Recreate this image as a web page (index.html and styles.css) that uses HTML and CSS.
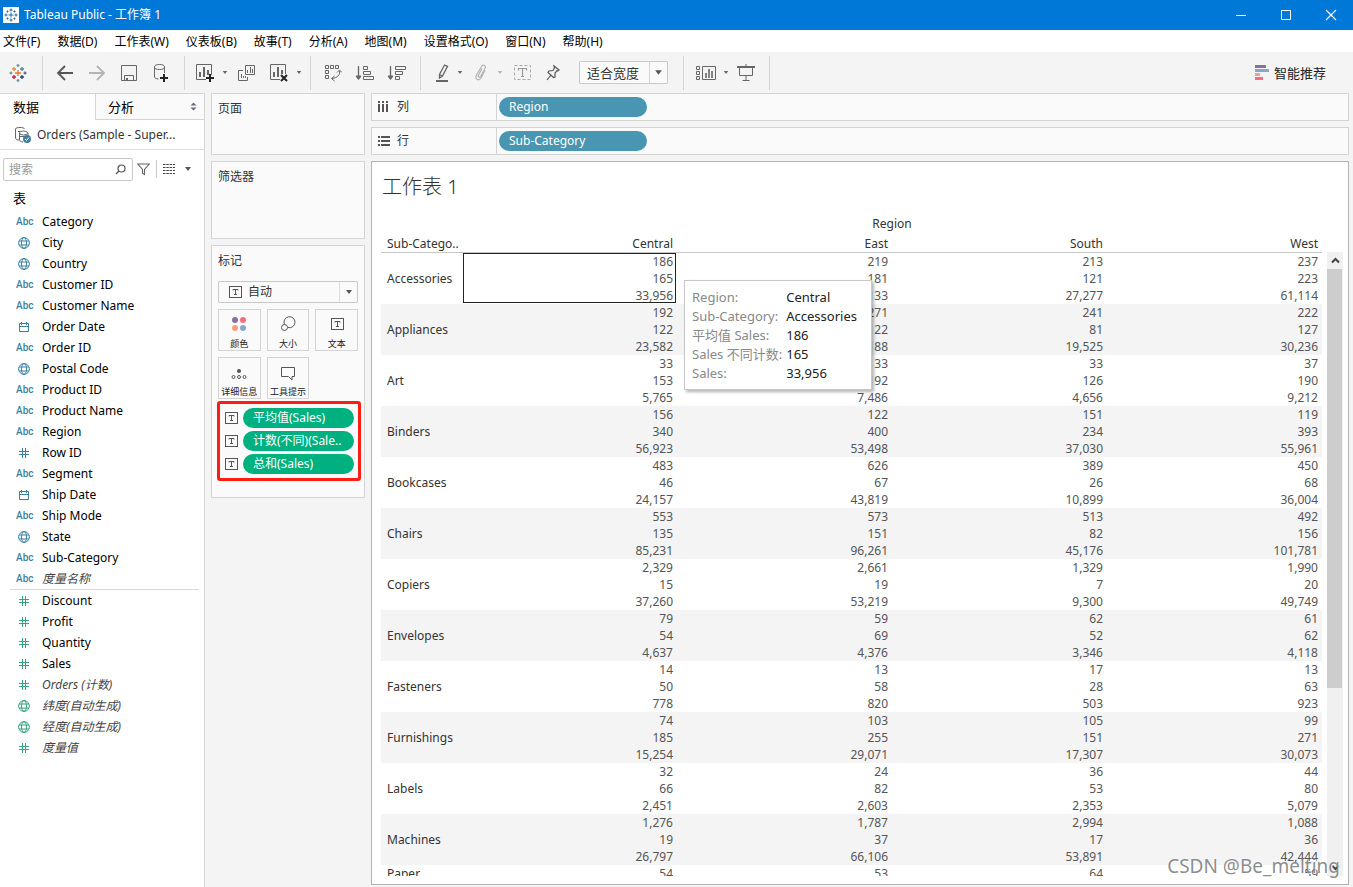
FILE: index.html
```html
<!DOCTYPE html>
<html lang="zh-CN">
<head>
<meta charset="utf-8">
<title>Tableau Public - 工作簿 1</title>
<link rel="stylesheet" href="styles.css">
</head>
<body>
<svg class="sprite" aria-hidden="true">
  <symbol id="globe" viewBox="0 0 12 12"><g fill="none" stroke="currentColor"><circle cx="6" cy="6" r="5.400"/><ellipse cx="6" cy="6" rx="2.500" ry="5.400"/><path d="M1.200 4h9.600M1.200 8h9.600"/></g></symbol>
  <symbol id="hash" viewBox="0 0 12 12"><path d="M4.500 1v10M7.500 1v10M1 4.500h10M1 7.500h10" fill="none" stroke="currentColor"/></symbol>
  <symbol id="cal" viewBox="0 0 12 12"><path d="M1.500 2.500h9v8h-9zM1.500 5.500h9M3.500 1v3M8.500 1v3" fill="none" stroke="currentColor"/></symbol>
  <symbol id="caret" viewBox="0 0 8 6"><path d="M1 1h6L4 5z" fill="currentColor"/></symbol>
  <symbol id="tbox" viewBox="0 0 14 13"><rect x="1.500" y=".5" width="12" height="11" fill="none" stroke="currentColor"/><path d="M5 4.500V3.500h5v1M7.500 3.500v5M6 8.500h3" fill="none" stroke="currentColor"/></symbol>
</svg>

<header class="titlebar">
  <svg class="app-icon" width="16" height="16" viewBox="0 0 16 16"><path fill="#fff" d="M0 0h16v16H0z"/><path d="M8 5.500v5M5.500 8h5M8 1.500v3M6.500 3h3M8 11.500v3M6.500 13h3M3 6.500v3M1.500 8h3M13 6.500v3M11.500 8h3M4.500 3.500v2M3.500 4.500h2M11.500 3.500v2M10.500 4.500h2M4.500 10.500v2M3.500 11.500h2M11.500 10.500v2M10.500 11.500h2" stroke="#1e6c99" fill="none"/></svg>
  <h1>Tableau Public - 工作簿 1</h1>
  <div class="window-buttons">
    <button aria-label="最小化"><svg width="12" height="12"><path d="M1 6.500h10" stroke="#fff"/></svg></button>
    <button aria-label="最大化"><svg width="12" height="12"><path d="M1.500 1.500h9v9h-9z" fill="none" stroke="#fff"/></svg></button>
    <button aria-label="关闭"><svg width="12" height="12"><path d="M1 1l10 10M11 1L1 11" stroke="#fff" stroke-width="1.200"/></svg></button>
  </div>
</header>

<nav class="menubar">
  <button>文件(F)</button><button>数据(D)</button><button>工作表(W)</button><button>仪表板(B)</button><button>故事(T)</button><button>分析(A)</button><button>地图(M)</button><button>设置格式(O)</button><button>窗口(N)</button><button>帮助(H)</button>
</nav>

<div class="toolbar">
  <div class="group home">
    <button aria-label="开始页面"><svg width="18" height="18" viewBox="0 0 18 18" fill="none" stroke-width="1.300"><path d="M9 6v6M6 9h6" stroke="#e8762c"/><path d="M5 3v4M3 5h4" stroke="#eb912c"/><path d="M13 3v4M11 5h4" stroke="#59879b"/><path d="M5 11v4M3 13h4" stroke="#c72035"/><path d="M13 11v4M11 13h4" stroke="#1f447e"/><path d="M9 0v3M7.500 1.500h3" stroke="#7099a6"/><path d="M9 15v3M7.500 16.500h3M2 7.500v3M.5 9h3" stroke="#7099a6"/><path d="M16 7.500v3M14.500 9h3" stroke="#5b6591"/></svg></button>
  </div>
  <div class="group">
    <button aria-label="撤消"><svg width="18" height="18"><path d="M2 9h15M9 2L2 9l7 7" fill="none" stroke="#555" stroke-width="1.800"/></svg></button>
    <button aria-label="重做"><svg width="18" height="18"><path d="M1 9h15M9 2l7 7-7 7" fill="none" stroke="#b4b4b4" stroke-width="1.800"/></svg></button>
    <button aria-label="保存"><svg width="18" height="18"><path d="M1.500 1.500h15v15h-15zM4.500 16v-4.500h9V16" fill="none" stroke="#666"/><path d="M6 14h2v3H6z" fill="#666"/></svg></button>
    <button aria-label="新建数据源"><svg width="18" height="20"><path d="M2.500 4v10c0 1 2 2 4 2M12.500 4v6" fill="none" stroke="#666"/><ellipse cx="7.500" cy="4" rx="5" ry="2.500" fill="none" stroke="#666"/><path d="M12 11v8M8 15h8" stroke="#222" stroke-width="2"/></svg></button>
  </div>
  <div class="group sheets">
    <span class="split"><button aria-label="新建工作表"><svg width="20" height="20"><path d="M11 16.500H1.500v-15h15V12" fill="none" stroke="#666"/><path d="M4 9h2v5H4zM8 4h2v10H8zM12 7h2v5h-2z" fill="#666"/><path d="M15 11v8M11 15h8" stroke="#222" stroke-width="2"/></svg></button><button class="caret" aria-label="更多新建"><svg width="6" height="5"><use href="#caret"/></svg></button></span>
    <button aria-label="复制"><svg width="18" height="18"><path d="M7.500 1.500h9v9h-9zM5 6.500H.5v10h9V13" fill="none" stroke="#666"/><path d="M9 6h1v3H9zM12 3h1v6h-1zM14 5h1v4h-1zM3 10h1v4H3zM5 12h1v2H5zM7 12h1v2H7z" fill="#666"/></svg></button>
    <span class="split"><button aria-label="清除工作表"><svg width="20" height="20"><path d="M11 16.500H1.500v-15h15V11" fill="none" stroke="#666"/><path d="M4 9h2v5H4zM8 4h2v10H8zM12 7h2v4h-2z" fill="#666"/><path d="M12 12l6 6M18 12l-6 6" stroke="#222" stroke-width="2"/></svg></button><button class="caret" aria-label="更多清除"><svg width="6" height="5"><use href="#caret"/></svg></button></span>
  </div>
  <div class="group">
    <button aria-label="交换行和列"><svg width="18" height="20" fill="none" stroke="#666"><path d="M1.500 2.500h3v3h-3zM6.500 2.500h3v3h-3zM11.500 2.500h3v3h-3zM1.500 7.500h3v3h-3zM1.500 12.500h3v3h-3zM15.500 7.500c1 4-2 7.500-7.500 8M13 9.500l2.500-2.500L18 9.500M10.500 13L7.500 15.500l3 2.500"/></svg></button>
    <button aria-label="升序排序"><svg width="20" height="18" fill="none" stroke="#666"><path d="M3.500 2v11" stroke-width="1.300"/><path d="M1 12h5l-2.500 3.500z" fill="#666"/><path d="M8.500 2.500h4v3h-4zM8.500 7.500h7v3h-7zM8.500 12.500h10v3h-10z"/></svg></button>
    <button aria-label="降序排序"><svg width="20" height="18" fill="none" stroke="#666"><path d="M3.500 2v11" stroke-width="1.300"/><path d="M1 12h5l-2.500 3.500z" fill="#666"/><path d="M8.500 2.500h10v3h-10zM8.500 7.500h7v3h-7zM8.500 12.500h4v3h-4z"/></svg></button>
  </div>
  <div class="group tight">
    <span class="split"><button aria-label="突出显示"><svg width="18" height="20" fill="none" stroke="#666"><path d="M10.500 2l3 1.400-5 9.600-3 2 0-3.600zM5.500 11.500l3 1.500" stroke-width="1.300"/><path d="M2 18h12" stroke-width="2"/></svg></button><button class="caret" aria-label="突出显示选项"><svg width="6" height="5"><use href="#caret"/></svg></button></span>
    <span class="split muted"><button aria-label="组成员"><svg width="18" height="18" fill="none" stroke="#b4b4b4" stroke-width="1.200"><path d="M8 4.500L4.500 11c-1 2 1 3 2 1.500l4.500-8c1.500-3-2-4.500-3.500-2L2.500 11c-2 4 2 6.500 4.500 3l4-7.500"/></svg></button><button class="caret" aria-label="组选项"><svg width="6" height="5"><use href="#caret"/></svg></button></span>
    <button aria-label="显示标记标签"><svg width="18" height="18" fill="none"><path d="M.5 1.500h16v14H.5z" stroke="#aaa" stroke-dasharray="3 2"/><path d="M4.500 6.500v-2h8v2M8.500 4.500v8M7 12.500h3" stroke="#999" stroke-width="1.200"/></svg></button>
    <button aria-label="固定轴"><svg width="16" height="18" fill="none" stroke="#555" stroke-width="1.200"><path d="M9 2l5 4-1.500 1-.5-.300L10 9v4l-1.500.500L3 8.500 4 7l4-.5L9.500 4zM6 11l-4 5"/></svg></button>
    <div class="fit"><select aria-label="适合"><option>适合宽度</option></select><svg width="9" height="7"><use href="#caret"/></svg></div>
  </div>
  <div class="group present">
    <span class="split"><button aria-label="显示/隐藏卡"><svg width="22" height="18" fill="none" stroke="#666"><path d="M1.500 2.500h3v3h-3zM1.500 7.500h3v3h-3zM1.500 12.500h3v3h-3zM7.500 2.500h13v13h-13z"/><path d="M11 9v5M14 5v9M17 7v7" stroke-width="1.600"/></svg></button><button class="caret" aria-label="卡选项"><svg width="6" height="5"><use href="#caret"/></svg></button></span>
    <button aria-label="演示模式"><svg width="18" height="18" fill="none" stroke="#666"><path d="M0 3h18" stroke-width="2"/><path d="M2.500 3.500v8h13v-8M9 0v3M9 12v4M5.500 16.500h7"/></svg></button>
  </div>
  <button class="showme"><svg width="14" height="16"><path d="M0 0h11v3H0z" fill="#8a7199"/><path d="M0 4h14v3H0z" fill="#86a8cd"/><path d="M0 8h5v3H0z" fill="#f1a37c"/><path d="M0 12h8v3H0z" fill="#f66d7f"/></svg>智能推荐</button>
</div>

<main class="workspace">
  <aside class="data-pane">
    <div class="tabs"><button class="tab active">数据</button><button class="tab">分析<svg width="7" height="9"><path d="M.5 3.500L3.500.5l3 3zM.5 5.500h6l-3 3z" fill="#666c7a"/></svg></button></div>
    <button class="source"><svg width="18" height="18" fill="none" stroke="#666"><path d="M1.500 3v9c0 1 1.500 2 3.500 2"/><path d="M1.500 3C1.500 1 10.500 1 10.500 3M4 5.500h2M5.500 7v7c0 1 2 2 3.500 2M14 7v3"/><ellipse cx="9.500" cy="7" rx="4" ry="2"/><path d="M6 10.500h5"/><circle cx="13" cy="13" r="4" fill="#3c80a0" stroke="none"/><path d="M11 13l1.500 1.500 2.500-3" stroke="#fff"/></svg>Orders (Sample - Super...</button>
    <div class="search-row">
      <label class="search"><input type="text" placeholder="搜索" aria-label="搜索"><svg width="11" height="11" fill="none" stroke="#555" stroke-width="1.200"><circle cx="6.500" cy="4.500" r="3.500"/><path d="M4 7L1 10"/></svg></label>
      <button aria-label="筛选"><svg width="13" height="13"><path d="M.8 1h11.400L7.500 6.500v5l-2-1.200V6.500z" fill="none" stroke="#666" stroke-width="1.100"/></svg></button>
      <button class="view" aria-label="视图"><svg width="12" height="10"><path d="M0 .5h12M0 3.500h12M0 6.500h12M0 9.500h12" stroke="#444" stroke-width="1.200" stroke-dasharray="2.500 .8"/></svg><svg width="8" height="6"><use href="#caret"/></svg></button>
    </div>
    <h2>表</h2>
    <ul class="fields">
      <li><i>Abc</i>Category</li>
      <li><svg><use href="#globe"/></svg>City</li>
      <li><svg><use href="#globe"/></svg>Country</li>
      <li><i>Abc</i>Customer ID</li>
      <li><i>Abc</i>Customer Name</li>
      <li><svg><use href="#cal"/></svg>Order Date</li>
      <li><i>Abc</i>Order ID</li>
      <li><svg><use href="#globe"/></svg>Postal Code</li>
      <li><i>Abc</i>Product ID</li>
      <li><i>Abc</i>Product Name</li>
      <li><i>Abc</i>Region</li>
      <li><svg><use href="#hash"/></svg>Row ID</li>
      <li><i>Abc</i>Segment</li>
      <li><svg><use href="#cal"/></svg>Ship Date</li>
      <li><i>Abc</i>Ship Mode</li>
      <li><svg><use href="#globe"/></svg>State</li>
      <li><i>Abc</i>Sub-Category</li>
      <li><i>Abc</i><em>度量名称</em></li>
    </ul>
    <ul class="fields measures">
      <li><svg><use href="#hash"/></svg>Discount</li>
      <li><svg><use href="#hash"/></svg>Profit</li>
      <li><svg><use href="#hash"/></svg>Quantity</li>
      <li><svg><use href="#hash"/></svg>Sales</li>
      <li><svg><use href="#hash"/></svg><em>Orders (计数)</em></li>
      <li><svg><use href="#globe"/></svg><em>纬度(自动生成)</em></li>
      <li><svg><use href="#globe"/></svg><em>经度(自动生成)</em></li>
      <li><svg><use href="#hash"/></svg><em>度量值</em></li>
    </ul>
  </aside>

  <section class="cards">
    <div class="card pages"><h2>页面</h2></div>
    <div class="card filters"><h2>筛选器</h2></div>
    <div class="card marks">
      <h2>标记</h2>
      <div class="mark-type"><svg class="t" width="14" height="13"><use href="#tbox"/></svg><select aria-label="标记类型"><option>自动</option></select><svg class="arrow" width="8" height="6"><use href="#caret"/></svg></div>
      <div class="mark-buttons">
        <button><svg width="16" height="18"><circle cx="4" cy="5" r="3" fill="#8a7199"/><circle cx="12" cy="5" r="3" fill="#f66d7f"/><circle cx="4" cy="13" r="3" fill="#f1a37c"/><circle cx="12" cy="13" r="3" fill="#86a8cd"/></svg>颜色</button>
        <button><svg width="16" height="18" fill="none" stroke="#555"><path d="M4.500 9.500a5.500 5.500 0 1 1 3.500 3"/><circle cx="4.500" cy="12.500" r="3"/></svg>大小</button>
        <button><svg width="14" height="18" viewBox="0 -3 14 18"><use href="#tbox" width="14" height="13"/></svg>文本</button>
        <button><svg width="16" height="18" fill="none" stroke="#555"><circle cx="8" cy="8" r="2" fill="#555" stroke="none"/><circle cx="2.500" cy="14" r="1.500"/><circle cx="8" cy="14" r="1.500"/><circle cx="13.500" cy="14" r="1.500"/></svg>详细信息</button>
        <button><svg width="16" height="18"><path d="M1.500 4.500h13v9H12V17l-3.500-3.500h-7z" fill="none" stroke="#555"/></svg>工具提示</button>
      </div>
      <ul class="mark-pills">
        <li><svg width="14" height="13"><use href="#tbox"/></svg><button>平均值(Sales)</button></li>
        <li><svg width="14" height="13"><use href="#tbox"/></svg><button>计数(不同)(Sale..</button></li>
        <li><svg width="14" height="13"><use href="#tbox"/></svg><button>总和(Sales)</button></li>
      </ul>
    </div>
  </section>

  <section class="view-area">
    <div class="shelf"><h2><svg width="12" height="12"><path d="M0 0h2v2H0zM4 0h2v2H4zM8 0h2v2H8zM0 3h2v8H0zM4 3h2v8H4zM8 3h2v8H8z" fill="#555"/></svg>列</h2><button class="pill">Region</button></div>
    <div class="shelf"><h2><svg width="12" height="12"><path d="M0 1h2v2H0zM0 5h2v2H0zM0 9h2v2H0zM3 1h9v2H3zM3 5h9v2H3zM3 9h9v2H3z" fill="#555"/></svg>行</h2><button class="pill">Sub-Category</button></div>
    <article class="sheet">
      <h2 class="sheet-title">工作表 1</h2>
      <div class="crosstab">
        <div class="viewport">
          <table>
            <colgroup><col class="label-col"><col><col><col><col></colgroup>
            <thead>
              <tr class="dimension"><td></td><th colspan="4">Region</th></tr>
              <tr><th>Sub-Catego..</th><th>Central</th><th>East</th><th>South</th><th>West</th></tr>
            </thead>
            <tbody>
              <tr><th>Accessories</th><td class="selected">186<br>165<br>33,956</td><td>219<br>181<br>32,133</td><td>213<br>121<br>27,277</td><td>237<br>223<br>61,114</td></tr>
              <tr><th>Appliances</th><td>192<br>122<br>23,582</td><td>271<br>122<br>34,188</td><td>241<br>81<br>19,525</td><td>222<br>127<br>30,236</td></tr>
              <tr><th>Art</th><td>33<br>153<br>5,765</td><td>33<br>192<br>7,486</td><td>33<br>126<br>4,656</td><td>37<br>190<br>9,212</td></tr>
              <tr><th>Binders</th><td>156<br>340<br>56,923</td><td>122<br>400<br>53,498</td><td>151<br>234<br>37,030</td><td>119<br>393<br>55,961</td></tr>
              <tr><th>Bookcases</th><td>483<br>46<br>24,157</td><td>626<br>67<br>43,819</td><td>389<br>26<br>10,899</td><td>450<br>68<br>36,004</td></tr>
              <tr><th>Chairs</th><td>553<br>135<br>85,231</td><td>573<br>151<br>96,261</td><td>513<br>82<br>45,176</td><td>492<br>156<br>101,781</td></tr>
              <tr><th>Copiers</th><td>2,329<br>15<br>37,260</td><td>2,661<br>19<br>53,219</td><td>1,329<br>7<br>9,300</td><td>1,990<br>20<br>49,749</td></tr>
              <tr><th>Envelopes</th><td>79<br>54<br>4,637</td><td>59<br>69<br>4,376</td><td>62<br>52<br>3,346</td><td>61<br>62<br>4,118</td></tr>
              <tr><th>Fasteners</th><td>14<br>50<br>778</td><td>13<br>58<br>820</td><td>17<br>28<br>503</td><td>13<br>63<br>923</td></tr>
              <tr><th>Furnishings</th><td>74<br>185<br>15,254</td><td>103<br>255<br>29,071</td><td>105<br>151<br>17,307</td><td>99<br>271<br>30,073</td></tr>
              <tr><th>Labels</th><td>32<br>66<br>2,451</td><td>24<br>82<br>2,603</td><td>36<br>53<br>2,353</td><td>44<br>80<br>5,079</td></tr>
              <tr><th>Machines</th><td>1,276<br>19<br>26,797</td><td>1,787<br>37<br>66,106</td><td>2,994<br>17<br>53,891</td><td>1,088<br>36<br>42,444</td></tr>
              <tr><th>Paper</th><td>54</td><td>53</td><td>64</td><td>59</td></tr>
            </tbody>
          </table>
        </div>
        <div class="scrollbar">
          <button aria-label="向上滚动"><svg width="9" height="7"><path d="M1 5.500l3.500-3.500L8 5.500" fill="none" stroke="#444" stroke-width="2"/></svg></button>
          <div class="track"><div class="thumb"></div></div>
          <button aria-label="向下滚动"><svg width="9" height="7"><path d="M1 1.500l3.500 3.500L8 1.500" fill="none" stroke="#444" stroke-width="2"/></svg></button>
        </div>
      </div>
      <dl class="tooltip">
        <dt>Region:</dt><dd>Central</dd>
        <dt>Sub-Category:</dt><dd>Accessories</dd>
        <dt>平均值 Sales:</dt><dd>186</dd>
        <dt>Sales 不同计数:</dt><dd>165</dd>
        <dt>Sales:</dt><dd>33,956</dd>
      </dl>
      <div class="watermark">CSDN @Be_melting</div>
    </article>
  </section>
</main>
</body>
</html>
```
FILE: styles.css
```css
* { box-sizing: border-box; }

body {
  margin: 0;
  height: 100vh;
  display: flex;
  flex-direction: column;
  overflow: hidden;
  background: #f4f4f4;
  color: #000;
  font: 12px/18px "Noto Sans", "Noto Sans CJK SC", sans-serif;
}

h1, h2 { margin: 0; font-size: 12px; font-weight: 400; }
ul { margin: 0; padding: 0; list-style: none; }
button { margin: 0; padding: 0; border: 0; background: none; color: inherit; font: inherit; }
select, input { font: inherit; color: inherit; }
svg { flex: none; display: block; }
.sprite { position: absolute; width: 0; height: 0; }

/* Window chrome */
.titlebar { flex: none; height: 30px; display: flex; align-items: center; background: #0078d7; color: #fff; padding-left: 3px; }
.titlebar h1 { margin-left: 5px; flex: 1; }
.window-buttons { display: flex; height: 100%; }
.window-buttons button { width: 45px; display: grid; place-items: center; }
.menubar { flex: none; height: 22px; display: flex; align-items: center; gap: 17px; padding: 2px 3px 0; background: #fff; white-space: nowrap; }

/* Toolbar */
.toolbar { flex: none; height: 41px; display: flex; align-items: center; color: #666; }
.group { height: 34px; display: flex; align-items: center; gap: 2px; padding: 0 8px 0 7px; border-right: 1px solid #d4d4d4; }
.group button { width: 30px; height: 24px; display: grid; place-items: center; }
.group.home { padding: 0 9px 0 3px; }
.group.sheets { padding: 0 6px 0 5px; }
.group .caret { width: 10px; }
.split { display: flex; }
.split.muted { color: #b4b4b4; }
.group.tight { gap: 6px; padding: 0 15px 0 10px; }
.group.tight button { width: 24px; }
.group.tight .caret { width: 10px; }
.group.present { gap: 0; padding: 0 8px 0 7px; }
.fit { position: relative; width: 89px; margin-left: 8px; color: #333; }
.fit select { display: block; width: 100%; height: 23px; padding: 0 7px; appearance: none; background: #fafafa linear-gradient(#d4d4d4, #d4d4d4) 69px 0 / 1px 100% no-repeat; border: 1px solid #c8c8c8; border-radius: 1px; font-size: 13px; }
.fit svg { position: absolute; right: 5px; top: 8px; color: #555; }
.showme { margin-left: auto; padding-right: 27px; display: flex; align-items: center; gap: 5px; color: #222; font-size: 13px; }

/* Workspace */
.workspace { flex: 1; min-height: 0; display: flex; gap: 6px; padding-right: 4px; }
.data-pane { flex: none; width: 205px; background: #fff; border: 1px solid #d4d4d4; border-width: 1px 1px 0 0; }
.tabs { display: flex; height: 26px; font-size: 13px; }
.tab { flex: 1; display: flex; align-items: center; justify-content: space-between; padding: 0 7px 0 12px; border: 1px solid #d4d4d4; border-width: 0 0 1px 1px; background: #fafafa; }
.tab.active { flex: none; width: 95px; padding-left: 13px; border: 0; background: #fff; }
.source { width: 100%; height: 30px; display: flex; align-items: center; gap: 5px; padding-left: 14px; border-bottom: 1px solid #e0e0e0; color: #333; white-space: nowrap; }
.search-row { display: flex; align-items: center; margin: 8px 0 0 3px; height: 22px; }
.search { position: relative; width: 130px; margin-right: 4px; }
.search input { display: block; width: 100%; height: 23px; padding: 0 5px; border: 1px solid #c8c8c8; border-radius: 2px; background: #fff; }
.search input::placeholder { color: #999; opacity: 1; }
.search svg { position: absolute; right: 7px; top: 6px; }
.view { display: flex; align-items: center; gap: 9px; height: 18px; margin-left: 6px; padding-left: 6px; border-left: 1px solid #c8c8c8; color: #555; }
.data-pane h2 { margin: 9px 0 4px 13px; font-size: 13px; }
.fields li { display: flex; align-items: center; height: 21px; white-space: nowrap; }
.fields i { width: 26px; margin-left: 16px; color: #3c80a0; font: 500 10px/19px Roboto, sans-serif; }
.fields svg { width: 12px; height: 12px; margin: 0 12px 0 18px; color: #3c80a0; }
.fields em { color: #444; }
.fields.measures::before { content: ""; display: block; height: 1px; margin: 0 5px 0 10px; background: #d9d9d9; }
.fields.measures svg { color: #34a47c; }

/* Cards */
.cards { flex: none; width: 154px; display: flex; flex-direction: column; gap: 6px; }
.card { border: 1px solid #d4d4d4; background: #fafafa; padding: 6px; color: #333; }
.pages { min-height: 62px; }
.filters { min-height: 78px; }
.marks { min-height: 253px; }
.mark-type { position: relative; margin: 11px 0 6px; }
.mark-type select { display: block; width: 100%; height: 22px; padding: 0 29px; appearance: none; background: #fafafa linear-gradient(#e0e0e0, #e0e0e0) 120px 0 / 1px 100% no-repeat; border: 1px solid #c8c8c8; border-radius: 2px; }
.mark-type .t { position: absolute; left: 10px; top: 5px; color: #555; }
.mark-type .arrow { position: absolute; right: 5px; top: 8px; color: #555; }
.mark-buttons { display: grid; grid-template-columns: repeat(3, 1fr); gap: 6px; }
.mark-buttons button { height: 42px; padding-top: 5px; display: flex; flex-direction: column; align-items: center; gap: 4px; border: 1px solid #d4d4d4; font-size: 9px; line-height: 14px; white-space: nowrap; color: #222; }
.mark-buttons svg { color: #555; }
.mark-pills { margin: 2px -3px 0 -1px; padding: 4px 4px; display: grid; gap: 3px; border: 3px solid #fc1d14; border-radius: 3px; }
.mark-pills li { display: flex; align-items: center; gap: 5px; color: #555; }
.mark-pills button { flex: 1; height: 20px; padding-left: 10px; border-radius: 10px; background: #00b180; color: #fff; text-align: left; white-space: nowrap; }

/* Shelves and sheet */
.view-area { flex: 1; min-width: 0; display: flex; flex-direction: column; gap: 6px; padding-bottom: 2px; }
.shelf { flex: none; height: 28px; display: flex; align-items: center; border: 1px solid #d4d4d4; background: #fafafa; }
.shelf h2 { width: 125px; height: 100%; display: flex; align-items: center; gap: 7px; padding-left: 6px; border-right: 1px solid #d4d4d4; color: #333; }
.pill { width: 148px; height: 20px; margin-left: 2px; padding-left: 10px; border-radius: 10px; background: #4996b2; color: #fff; text-align: left; }
.sheet { flex: 1; min-height: 0; position: relative; display: flex; flex-direction: column; border: 1px solid #b4b4b4; background: #fff; padding: 11px 5px 8px 9px; }
.sheet-title { flex: none; margin: 0 0 11px 1px; font-size: 20px; line-height: 28px; font-weight: 300; color: #333; }
.crosstab { flex: 1; min-height: 0; display: flex; gap: 5px; }
.viewport { flex: 1; min-width: 0; overflow: hidden; }
table { width: 100%; table-layout: fixed; border-collapse: collapse; line-height: 17px; color: #555; }
.label-col { width: 81px; }
th, td { padding: 0 4px; text-align: right; font-weight: 400; vertical-align: top; white-space: nowrap; }
th { color: #333; }
th:first-child { text-align: left; padding: 0 0 0 6px; }
thead tr { height: 20px; }
thead tr:last-child { border-bottom: 1px solid #c8c8c8; }
thead th { vertical-align: bottom; }
thead .dimension th { text-align: center; }
tbody th { vertical-align: middle; }
tbody tr:nth-child(even) { background: #f4f4f4; }
.selected { outline: 1px solid #222; outline-offset: -2px; }
.scrollbar { flex: none; width: 16px; margin-top: 40px; display: flex; flex-direction: column; background: #f0f0f0; }
.scrollbar button { height: 17px; display: grid; place-items: center; }
.track { flex: 1; }
.thumb { height: 71%; margin-right: 1px; background: #cdcdcd; }
.tooltip { position: absolute; left: 312px; top: 118px; margin: 0; padding: 7px 14px 7px 7px; display: grid; grid-template-columns: auto auto; gap: 1px 4px; border: 1px solid #c8c8c8; background: #fff; box-shadow: 2px 2px 3px rgba(0, 0, 0, .3); font-size: 13px; white-space: nowrap; }
.tooltip dt { color: #888; }
.tooltip dd { margin: 0; color: #222; }
.watermark { position: absolute; right: 8px; bottom: 4px; font-size: 19px; line-height: 28px; color: rgba(120, 120, 120, .85); text-shadow: 1px 1px 1px #fff; }
```
